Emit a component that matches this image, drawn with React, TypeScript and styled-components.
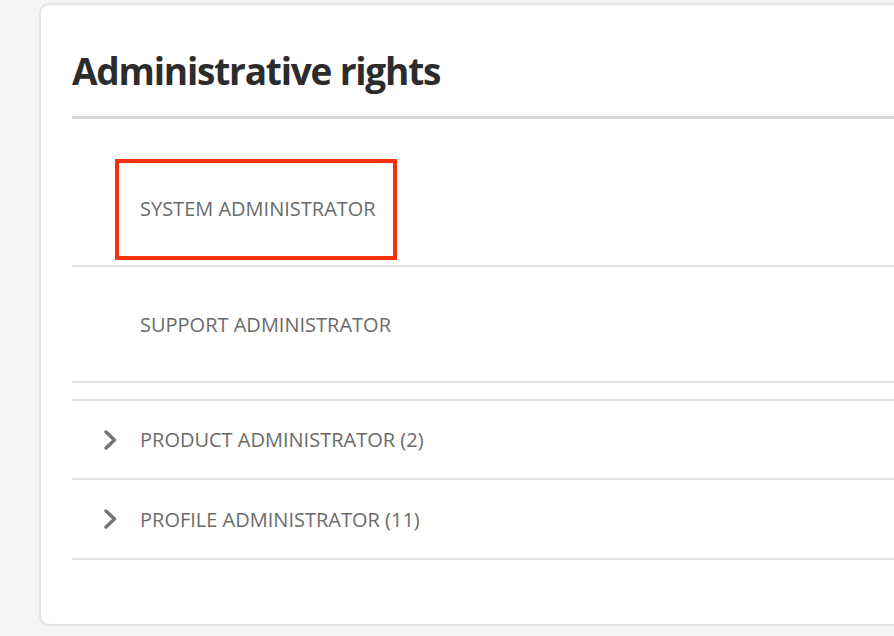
import styled, { createGlobalStyle } from 'styled-components';

const GlobalStyle = createGlobalStyle`
    html, body {
        margin: 0;
        padding: 0;
        background-color: #f5f5f5;
        overflow: hidden;
    }
    body {
        font-family: 'Open Sans', 'Liberation Sans', sans-serif;
    }
`;

const Page = styled.div`
    width: 894px;
    height: 636px;
    padding: 3px 0 0 39px;
    box-sizing: border-box;
    overflow: hidden;
`;

const Card = styled.section`
    width: 900px;
    height: 623px;
    box-sizing: border-box;
    background-color: #ffffff;
    border: 2px solid #e4e4e4;
    border-radius: 10px;
    padding: 0 0 0 31px;
`;

const Title = styled.h1`
    margin: 0;
    padding-top: 40px;
    height: 71px;
    box-sizing: content-box;
    font-size: 37px;
    line-height: 52px;
    font-weight: 700;
    color: #2c2c2c;
    letter-spacing: -1.2px;
    border-bottom: 3px solid #d5d5d5;
`;

const List = styled.div`
    padding-top: 32px;
`;

const Group = styled.div<{ $gap?: number }>`
    margin-top: ${(p) => p.$gap ?? 0}px;
    border-top: ${(p) => (p.$gap ? '2px solid #e1e1e1' : 'none')};
`;

const Row = styled.div<{ $height: number }>`
    position: relative;
    display: flex;
    align-items: center;
    height: ${(p) => p.$height}px;
    border-bottom: 2px solid #e1e1e1;
    padding-left: 32px;
`;

const Toggle = styled.span`
    display: flex;
    align-items: center;
    width: 36px;
    color: #737373;
`;

const Label = styled.span<{ $indent?: boolean }>`
    padding-left: ${(p) => (p.$indent ? 36 : 0)}px;
    font-size: 20px;
    color: #6b6b6b;
`;

const Highlight = styled.span`
    position: absolute;
    left: 43px;
    top: 8px;
    width: 282px;
    height: 101px;
    box-sizing: border-box;
    border: 4px solid #f3320c;
    pointer-events: none;
`;

const Chevron = () => (
    <svg width="13" height="20" viewBox="0 0 13 20" fill="none">
        <polyline
            points="2,2 10.5,10 2,18"
            stroke="currentColor"
            strokeWidth="3.4"
            strokeLinecap="round"
            strokeLinejoin="round"
        />
    </svg>
);

const roles = [
    { name: 'SYSTEM ADMINISTRATOR', highlighted: true },
    { name: 'SUPPORT ADMINISTRATOR', highlighted: false },
];

const groups = [
    { name: 'PRODUCT ADMINISTRATOR (2)', height: 77 },
    { name: 'PROFILE ADMINISTRATOR (11)', height: 78 },
];

const App: React.FC = () => (
    <>
        <GlobalStyle />
        <Page>
            <Card>
                <Title>Administrative rights</Title>
                <List>
                    {roles.map((role) => (
                        <Row key={role.name} $height={114}>
                            {role.highlighted && <Highlight />}
                            <Label $indent>{role.name}</Label>
                        </Row>
                    ))}
                    <Group $gap={16}>
                        {groups.map((group) => (
                            <Row key={group.name} $height={group.height}>
                                <Toggle>
                                    <Chevron />
                                </Toggle>
                                <Label>{group.name}</Label>
                            </Row>
                        ))}
                    </Group>
                </List>
            </Card>
        </Page>
    </>
);

export default App;
